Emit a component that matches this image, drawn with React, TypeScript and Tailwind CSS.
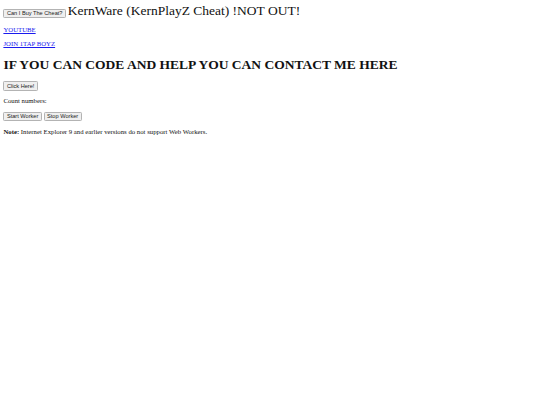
// the page is a plain document drawn at 1280px wide and shrunk to 540px (x0.422)
const btn =
  "inline-block align-baseline bg-[#efefef] border-[0.85px] border-[#b3b3b3] rounded-[1.3px] px-[2.5px] py-[0.4px] text-[5.63px] leading-[1.15] text-[#222] [font-family:'Liberation_Sans',Arial,sans-serif]";

export default function App() {
  return (
    <div className="min-h-screen bg-white p-[3.4px] text-[6.75px] leading-[1.15] text-[#111] [font-family:'Liberation_Serif','Times_New_Roman',serif]">
      <div>
        <button className={btn}>Can I Buy The Cheat?</button>{" "}
        <span className="text-[13.5px]">KernWare (KernPlayZ Cheat) !NOT OUT!</span>
      </div>
      <p className="my-[6.75px]">
        <a href="#" className="text-[#1a1aee] underline">YOUTUBE</a>
      </p>
      <p className="my-[6.75px]">
        <a href="#" className="text-[#1a1aee] underline">JOIN 1TAP BOYZ</a>
      </p>
      <h1 className="my-[9px] text-[13.5px] font-bold">IF YOU CAN CODE AND HELP YOU CAN CONTACT ME HERE</h1>
      <button className={btn}>Click Here!</button>
      <p className="my-[6.75px]">Count numbers: <output></output></p>
      <div>
        <button className={btn}>Start Worker</button>{" "}
        <button className={btn}>Stop Worker</button>
      </div>
      <p className="my-[6.75px]">
        <strong>Note:</strong> Internet Explorer 9 and earlier versions do not support Web Workers.
      </p>
    </div>
  );
}
